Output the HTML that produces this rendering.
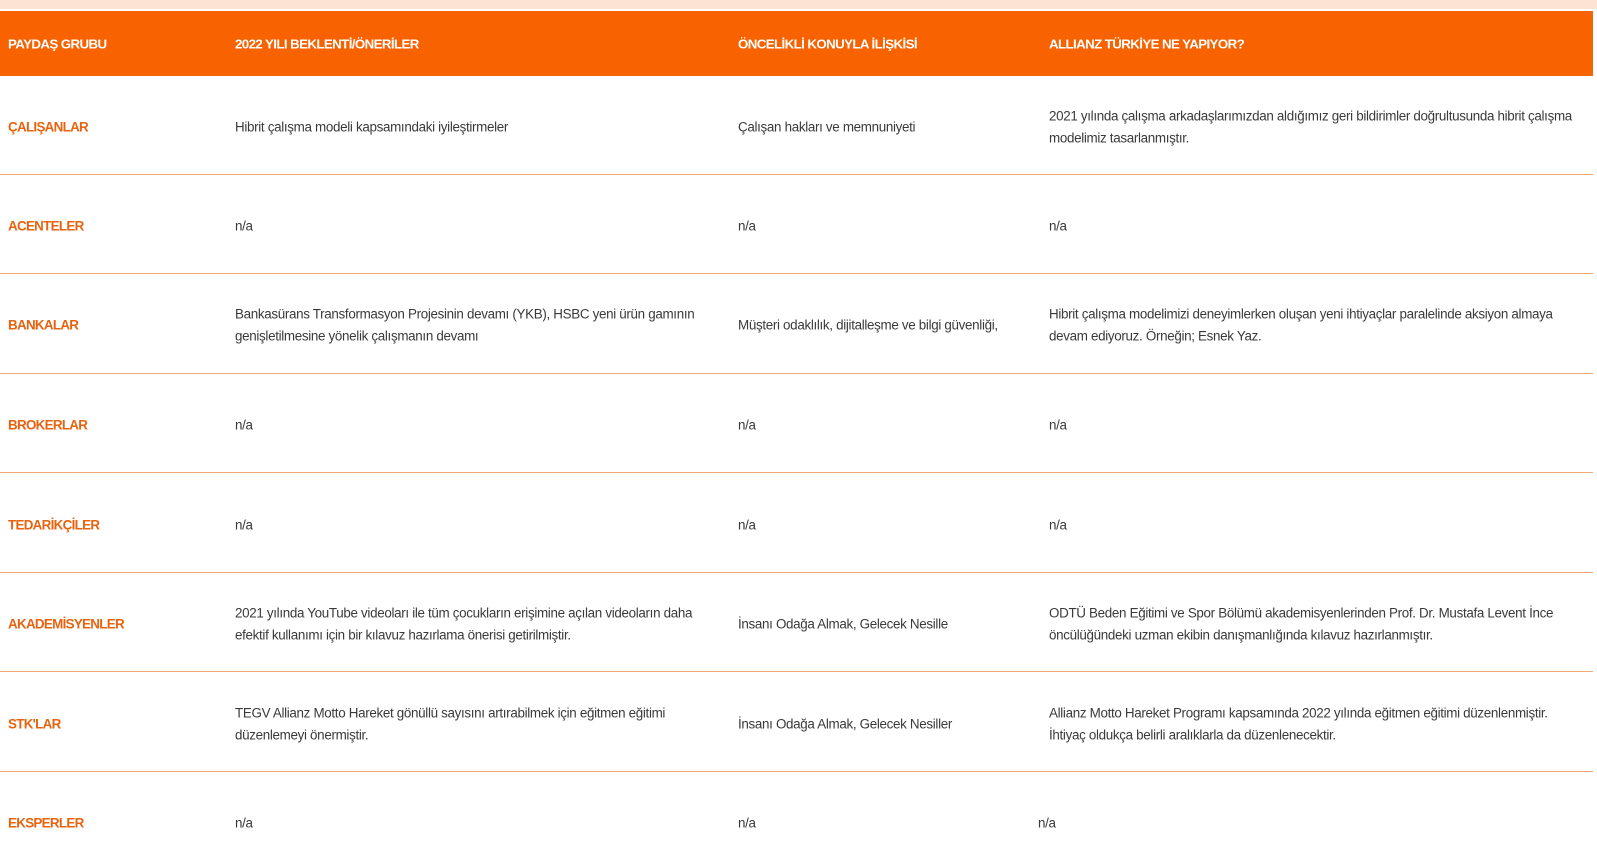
<!DOCTYPE html>
<html><head><meta charset="utf-8"><style>
body{margin:0;width:1597px;height:853px;background:#fff;position:relative;overflow:hidden;font-family:"Liberation Sans",sans-serif;color:#3a3a3a;}
.top{position:absolute;left:0;top:0;width:1597px;height:9px;background:#fde3d3}
.hd{position:absolute;left:0;top:11px;width:1593px;height:65px;background:#f86200}
.h{position:absolute;top:44px;transform:translateY(-50%);color:#fff;font-weight:bold;font-size:13.3px;letter-spacing:-0.6px}
.line{position:absolute;left:0;width:1593px;height:1px;background:#f2a77a}
.c{position:absolute;font-size:13.4px;line-height:21.5px;letter-spacing:-0.32px;transform:translateY(-50%);white-space:nowrap}
.l{color:#e8630f;font-weight:bold;letter-spacing:-0.7px}
</style></head><body>
<div class="top"></div>
<div class="hd"></div>
<div class="h" style="left:8px">PAYDAŞ GRUBU</div>
<div class="h" style="left:235px">2022 YILI BEKLENTİ/ÖNERİLER</div>
<div class="h" style="left:738px">ÖNCELİKLİ KONUYLA İLİŞKİSİ</div>
<div class="h" style="left:1049px">ALLIANZ TÜRKİYE NE YAPIYOR?</div>

<div class="line" style="top:174px"></div>
<div class="line" style="top:273px"></div>
<div class="line" style="top:373px"></div>
<div class="line" style="top:472px"></div>
<div class="line" style="top:572px"></div>
<div class="line" style="top:671px"></div>
<div class="line" style="top:771px"></div>

<div class="c l" style="left:8px;top:127px">ÇALIŞANLAR</div>
<div class="c" style="left:235px;top:127px">Hibrit çalışma modeli kapsamındaki iyileştirmeler</div>
<div class="c" style="left:738px;top:127px">Çalışan hakları ve memnuniyeti</div>
<div class="c" style="left:1049px;top:127px">2021 yılında çalışma arkadaşlarımızdan aldığımız geri bildirimler doğrultusunda hibrit çalışma<br>modelimiz tasarlanmıştır.</div>

<div class="c l" style="left:8px;top:226px">ACENTELER</div>
<div class="c" style="left:235px;top:226px">n/a</div>
<div class="c" style="left:738px;top:226px">n/a</div>
<div class="c" style="left:1049px;top:226px">n/a</div>

<div class="c l" style="left:8px;top:325px">BANKALAR</div>
<div class="c" style="left:235px;top:325px">Bankasürans Transformasyon Projesinin devamı (YKB), HSBC yeni ürün gamının<br>genişletilmesine yönelik çalışmanın devamı</div>
<div class="c" style="left:738px;top:325px">Müşteri odaklılık, dijitalleşme ve bilgi güvenliği,</div>
<div class="c" style="left:1049px;top:325px">Hibrit çalışma modelimizi deneyimlerken oluşan yeni ihtiyaçlar paralelinde aksiyon almaya<br>devam ediyoruz. Örneğin; Esnek Yaz.</div>

<div class="c l" style="left:8px;top:425px">BROKERLAR</div>
<div class="c" style="left:235px;top:425px">n/a</div>
<div class="c" style="left:738px;top:425px">n/a</div>
<div class="c" style="left:1049px;top:425px">n/a</div>

<div class="c l" style="left:8px;top:525px">TEDARİKÇİLER</div>
<div class="c" style="left:235px;top:525px">n/a</div>
<div class="c" style="left:738px;top:525px">n/a</div>
<div class="c" style="left:1049px;top:525px">n/a</div>

<div class="c l" style="left:8px;top:624px">AKADEMİSYENLER</div>
<div class="c" style="left:235px;top:624px">2021 yılında YouTube videoları ile tüm çocukların erişimine açılan videoların daha<br>efektif kullanımı için bir kılavuz hazırlama önerisi getirilmiştir.</div>
<div class="c" style="left:738px;top:624px">İnsanı Odağa Almak, Gelecek Nesille</div>
<div class="c" style="left:1049px;top:624px">ODTÜ Beden Eğitimi ve Spor Bölümü akademisyenlerinden Prof. Dr. Mustafa Levent İnce<br>öncülüğündeki uzman ekibin danışmanlığında kılavuz hazırlanmıştır.</div>

<div class="c l" style="left:8px;top:724px">STK'LAR</div>
<div class="c" style="left:235px;top:724px">TEGV Allianz Motto Hareket gönüllü sayısını artırabilmek için eğitmen eğitimi<br>düzenlemeyi önermiştir.</div>
<div class="c" style="left:738px;top:724px">İnsanı Odağa Almak, Gelecek Nesiller</div>
<div class="c" style="left:1049px;top:724px">Allianz Motto Hareket Programı kapsamında 2022 yılında eğitmen eğitimi düzenlenmiştir.<br>İhtiyaç oldukça belirli aralıklarla da düzenlenecektir.</div>

<div class="c l" style="left:8px;top:823px">EKSPERLER</div>
<div class="c" style="left:235px;top:823px">n/a</div>
<div class="c" style="left:738px;top:823px">n/a</div>
<div class="c" style="left:1038px;top:823px">n/a</div>
</body></html>
